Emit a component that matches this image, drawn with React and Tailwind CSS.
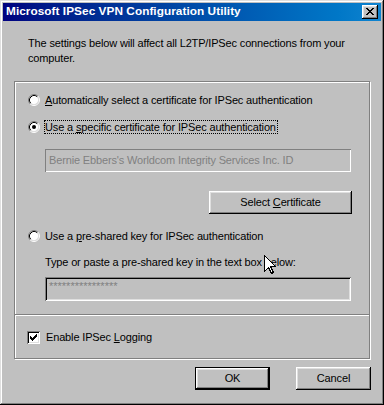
import React from 'react';

const raised =
  'shadow-[inset_-1px_-1px_0_#000,inset_1px_1px_0_#fff,inset_-2px_-2px_0_#808080,inset_2px_2px_0_#dfdfdf]';

function Radio({ checked }) {
  return (
    <svg width="12" height="12" viewBox="0 0 12 12" className="shrink-0">
      <circle cx="6" cy="6" r="4.5" fill="#fff" />
      <path d="M2.11 9.89 A5.5 5.5 0 0 1 9.89 2.11" fill="none" stroke="#808080" />
      <path d="M9.89 2.11 A5.5 5.5 0 0 1 2.11 9.89" fill="none" stroke="#fff" />
      <path d="M2.82 9.18 A4.5 4.5 0 0 1 9.18 2.82" fill="none" stroke="#000" />
      <path d="M9.18 2.82 A4.5 4.5 0 0 1 2.82 9.18" fill="none" stroke="#dfdfdf" />
      {checked && <circle cx="6" cy="6" r="2" fill="#000" />}
    </svg>
  );
}

// 7x7 pixel tick, like the classic checkbox
const tick = ['......X', '.....XX', 'X...XXX', 'XX.XXX.', 'XXXXX..', '.XXX...', '..X....'];
const closeX = ['XX....XX', '.XX..XX.', '..XXXX..', '...XX...', '..XXXX..', '.XX..XX.', 'XX....XX'];

function Pixels({ rows, x, y }) {
  const rects = [];
  rows.forEach((row, j) =>
    row.split('').forEach((c, i) => {
      if (c === 'X') rects.push(<rect key={`${i}-${j}`} x={x + i} y={y + j} width="1" height="1" fill="#000" />);
    })
  );
  return rects;
}

function Checkbox() {
  return (
    <div className="w-[13px] h-[13px] shrink-0 bg-white shadow-[inset_1px_1px_0_#808080,inset_-1px_-1px_0_#fff,inset_2px_2px_0_#000,inset_-2px_-2px_0_#dfdfdf]">
      <svg width="13" height="13" shapeRendering="crispEdges">
        <Pixels rows={tick} x={3} y={3} />
      </svg>
    </div>
  );
}

function Button({ children, isDefault, className = '' }) {
  if (isDefault) {
    return (
      <div className={`border border-black ${className}`}>
        <div className={`w-full h-full flex items-center justify-center ${raised}`}>
          <span>{children}</span>
        </div>
      </div>
    );
  }
  return (
    <div className={`flex items-center justify-center ${raised} ${className}`}>
      <span>{children}</span>
    </div>
  );
}

export default function App() {
  return (
    <div className="relative w-[384px] h-[405px] bg-[#c0c0c0] p-[3px] flex flex-col text-black text-[11px] tracking-[-0.15px] font-['Liberation_Sans',Arial,sans-serif] shadow-[inset_-1px_-1px_0_#000,inset_1px_1px_0_#dfdfdf,inset_-2px_-2px_0_#808080,inset_2px_2px_0_#fff] select-none">
      {/* Title bar */}
      <div className="h-[18px] flex items-center justify-between bg-linear-to-r from-[#000080] to-[#1084d0] pl-[3px] pr-[3px]">
        <span className="text-white font-bold text-[11.8px] tracking-[0.05px] leading-none">
          Microsoft IPSec VPN Configuration Utility
        </span>
        <div className={`w-[16px] h-[14px] bg-[#c0c0c0] ${raised}`}>
          <svg width="16" height="14" shapeRendering="crispEdges">
            <Pixels rows={closeX} x={4} y={3} />
          </svg>
        </div>
      </div>

      <p className="mt-[15px] pl-[25px] w-[350px] leading-[15px]">
        The settings below will affect all L2TP/IPSec connections from your computer.
      </p>

      {/* Group box */}
      <div className="mx-[11px] mt-[15px] border border-[#808080] shadow-[inset_1px_1px_0_#fff,1px_1px_0_#fff]">
        <div className="pl-[13px] pt-[10px] pb-[13px] flex flex-col">
          <div className="h-[16px] flex items-center">
            <Radio />
            <span className="ml-[4px] border border-transparent leading-[12px]">
              <u>A</u>utomatically select a certificate for IPSec authentication
            </span>
          </div>
          <div className="mt-[11px] h-[16px] flex items-center">
            <Radio checked />
            <span className="ml-[4px] border border-dotted border-black leading-[12px] pr-[1px]">
              Use a <u>s</u>pecific certificate for IPSec authentication
            </span>
          </div>

          <div className="mt-[14px] ml-[17px] w-[306px] h-[23px] flex items-center pl-[4px] text-[#808080] shadow-[inset_1px_1px_0_#808080,inset_-1px_-1px_0_#fff]">
            Bernie Ebbers's Worldcom Integrity Services Inc. ID
          </div>

          <Button className="mt-[19px] ml-[181px] w-[143px] h-[23px]">
            Select <u>C</u>ertificate
          </Button>

          <div className="mt-[14px] h-[16px] flex items-center">
            <Radio />
            <span className="ml-[4px] border border-transparent leading-[12px]">
              Use a <u>p</u>re-shared key for IPSec authentication
            </span>
          </div>

          <div className="mt-[10px] ml-[17px] h-[16px] flex items-center">
            Type or paste a pre-shared key in the text box below:
          </div>

          <div className="mt-[7px] ml-[17px] w-[306px] h-[24px] pl-[4px] pt-[3px] leading-[13px] text-[#808080] tracking-[0px] shadow-[inset_1px_1px_0_#808080,inset_-1px_-1px_0_#fff,inset_2px_2px_0_#000,inset_-2px_-2px_0_#dfdfdf]">
            ****************
          </div>
        </div>

        <div className="h-[2px] border-t border-[#808080] bg-white" />

        <div className="pl-[12px] pt-[13px] pb-[13px]">
          <div className="h-[16px] flex items-center">
            <Checkbox />
            <span className="ml-[6px]">
              Enable IPSec <u>L</u>ogging
            </span>
          </div>
        </div>
      </div>

      {/* Dialog buttons */}
      <div className="mt-[8px] mr-[10px] flex justify-end gap-[26px]">
        <Button isDefault className="w-[75px] h-[23px]">OK</Button>
        <Button className="w-[75px] h-[23px]">Cancel</Button>
      </div>

      {/* mouse pointer */}
      <svg
        className="absolute left-[264px] top-[255px]"
        width="13"
        height="20"
        viewBox="0 0 13 20"
        shapeRendering="crispEdges"
      >
        <path
          d="M0.5 0.5 L0.5 16.5 L4.5 12.5 L7.5 18.5 L9.5 17.5 L6.5 11.5 L11.5 11.5 Z"
          fill="#fff"
          stroke="#000"
          strokeWidth="1"
        />
      </svg>
    </div>
  );
}
